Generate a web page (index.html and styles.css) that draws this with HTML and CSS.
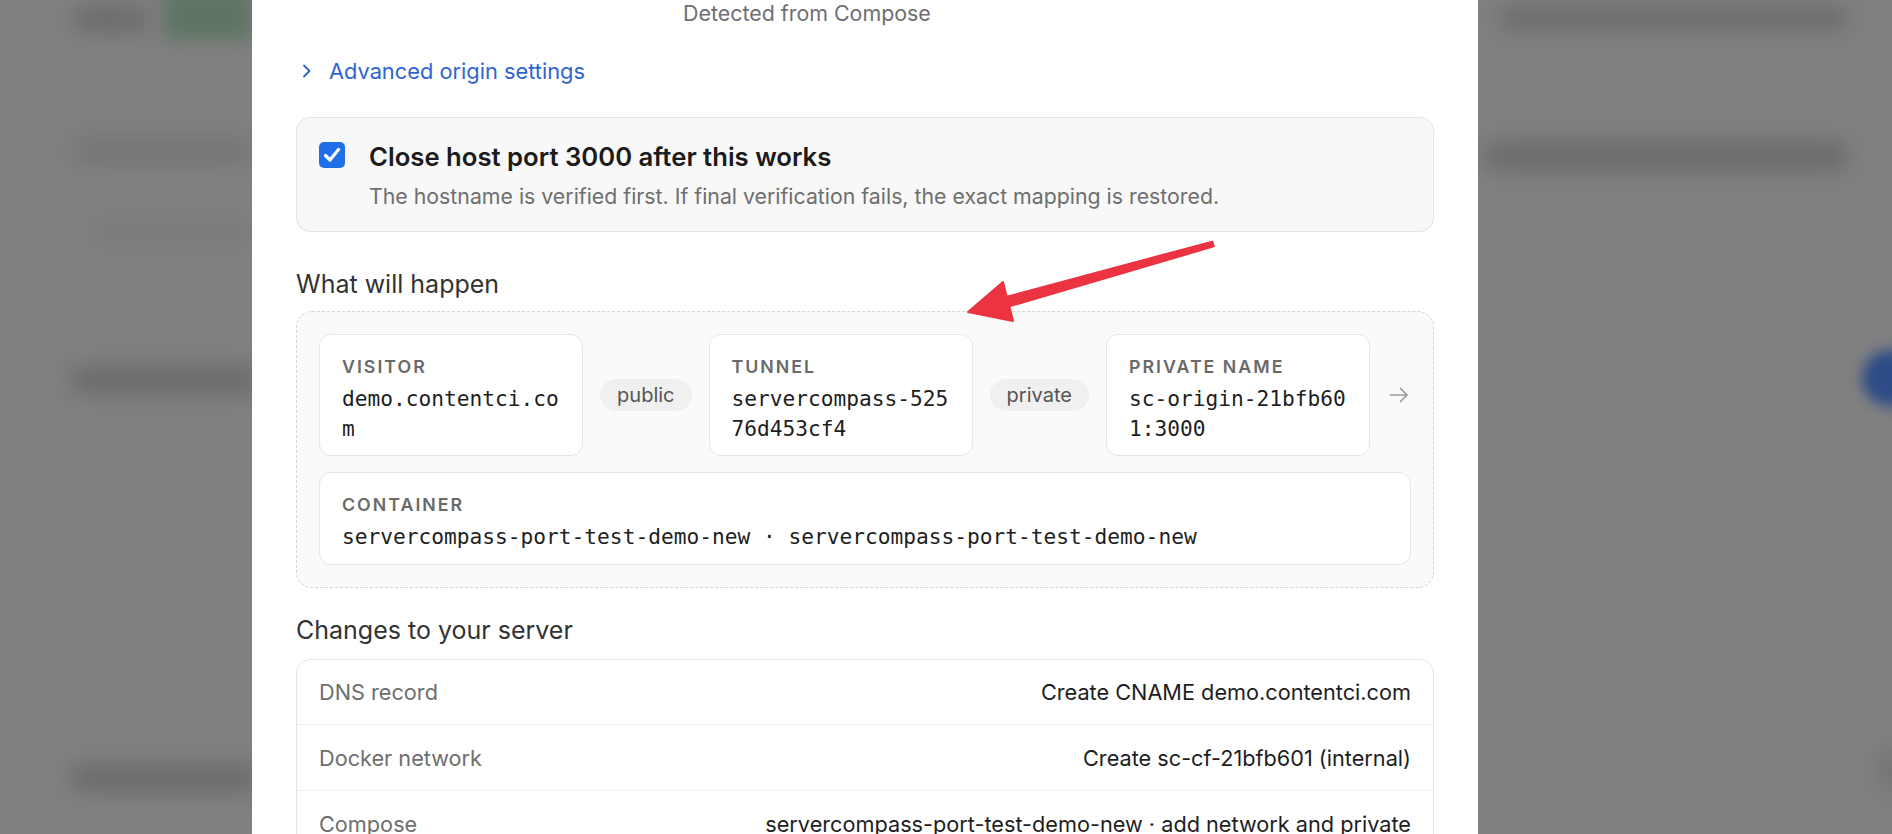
FILE: index.html
```html
<!DOCTYPE html>
<html lang="en">
<head>
<meta charset="utf-8">
<title>Expose service</title>
<link rel="stylesheet" href="styles.css">
</head>
<body>
<div class="page">
  <aside class="side side-left" aria-hidden="true">
    <div class="blob-row top-row">
      <div class="blob blob-dark b-l1"></div>
      <div class="blob blob-green"></div>
    </div>
    <div class="blob blob-soft b-l2"></div>
    <div class="blob blob-faint b-l3"></div>
    <div class="blob blob-dark b-l4"></div>
    <div class="blob blob-dark b-l5"></div>
  </aside>

  <main class="modal">
    <div class="detected">Detected from Compose</div>

    <button class="advanced" type="button">
      <svg class="chev" viewBox="0 0 10 14" width="10" height="14"><path d="M2 1.5 L7.5 7 L2 12.5" fill="none" stroke="currentColor" stroke-width="1.8" stroke-linecap="round" stroke-linejoin="round"/></svg>
      <span>Advanced origin settings</span>
    </button>

    <div class="check-card">
      <span class="checkbox">
        <svg viewBox="0 0 26 26" width="26" height="26"><rect x="0" y="0" width="26" height="26" rx="5" fill="#1f6fe8"/><path d="M6.5 13.5 L11 18 L19.5 7.5" fill="none" stroke="#fff" stroke-width="3.2" stroke-linecap="round" stroke-linejoin="round"/></svg>
      </span>
      <div class="check-text">
        <div class="check-title">Close host port 3000 after this works</div>
        <div class="check-sub">The hostname is verified first. If final verification fails, the exact mapping is restored.</div>
      </div>
    </div>

    <h3 class="section-title st-flow">What will happen</h3>
    <div class="flow">
      <div class="node">
        <div class="node-label">Visitor</div>
        <div class="node-value">demo.contentci.com</div>
      </div>
      <span class="pill">public</span>
      <div class="node">
        <div class="node-label">Tunnel</div>
        <div class="node-value">servercompass-52576d453cf4</div>
      </div>
      <span class="pill">private</span>
      <div class="node">
        <div class="node-label">Private name</div>
        <div class="node-value">sc-origin-21bfb601:3000</div>
      </div>
      <span class="flow-arrow">
        <svg viewBox="0 0 20 16" width="20" height="16"><path d="M1.5 8 H18 M11.5 1.5 L18 8 L11.5 14.5" fill="none" stroke="#9a9a9a" stroke-width="1.7" stroke-linecap="round" stroke-linejoin="round"/></svg>
      </span>
      <div class="node node-wide">
        <div class="node-label">Container</div>
        <div class="node-value">servercompass-port-test-demo-new · servercompass-port-test-demo-new</div>
      </div>
    </div>

    <h3 class="section-title st-changes">Changes to your server</h3>
    <div class="changes">
      <div class="change-row">
        <span class="change-key">DNS record</span>
        <span class="change-val">Create CNAME demo.contentci.com</span>
      </div>
      <div class="change-row">
        <span class="change-key">Docker network</span>
        <span class="change-val">Create sc-cf-21bfb601 (internal)</span>
      </div>
      <div class="change-row">
        <span class="change-key">Compose</span>
        <span class="change-val">servercompass-port-test-demo-new · add network and private</span>
      </div>
    </div>
  </main>

  <aside class="side side-right" aria-hidden="true">
    <div class="blob blob-dark b-r1"></div>
    <div class="blob blob-dark b-r2"></div>
    <div class="blob blob-blue"></div>
    <div class="blob blob-soft b-r4"></div>
  </aside>

  <svg class="annotation" viewBox="0 0 300 110" width="300" height="110" aria-hidden="true">
    <polygon points="28,87 63,57 66.7,71.7 272.3,16.6 273.7,21.4 69.3,81.3 73,96" fill="#ec3342" stroke="#ec3342" stroke-width="2" stroke-linejoin="round"/>
  </svg>
</div>
</body>
</html>
```

FILE: styles.css
```css
* { box-sizing: border-box; }

html, body {
  margin: 0;
  padding: 0;
  height: 834px;
  overflow: hidden;
  background: #808080;
}

body {
  font-family: "Inter", "Liberation Sans", sans-serif;
  color: #1d1d1f;
}

.page {
  position: relative;
  display: flex;
  height: 834px;
  overflow: hidden;
}

/* blurred backdrop */
.side {
  flex: none;
  overflow: hidden;
}
.side-left { width: 252px; }
.side-right { flex: 1; }

.blob {
  filter: blur(11px);
  border-radius: 12px;
}
.blob-row { display: flex; align-items: flex-start; }
.top-row { height: 42px; }
.blob-dark { background: #6a6a6a; }
.blob-soft { background: #737373; }
.blob-faint { background: #797979; }
.blob-green { background: #5e7462; width: 96px; height: 50px; margin-left: 14px; margin-top: -10px; border-radius: 6px; filter: blur(9px); }
.b-l1 { width: 85px; height: 24px; margin-left: 72px; margin-top: 7px; }
.b-l2 { width: 180px; height: 24px; margin-left: 72px; margin-top: 97px; }
.b-l3 { width: 160px; height: 18px; margin-left: 92px; margin-top: 60px; }
.b-l4 { width: 190px; height: 26px; margin-left: 70px; margin-top: 126px; }
.b-l5 { width: 190px; height: 26px; margin-left: 70px; margin-top: 372px; }

.b-r1 { width: 350px; height: 22px; margin-left: 20px; margin-top: 7px; }
.b-r2 { width: 364px; height: 28px; margin-left: 6px; margin-top: 113px; }
.blob-blue { background: #2d4b86; width: 60px; height: 56px; margin-left: 384px; margin-top: 180px; border-radius: 28px; filter: blur(7px); }
.b-r4 { width: 30px; height: 40px; margin-left: 400px; margin-top: 345px; }

/* modal */
.modal {
  flex: none;
  width: 1226px;
  background: #ffffff;
  padding: 0 44px;
}

.detected {
  padding-left: 387px;
  font-size: 21.4px;
  line-height: 26px;
  color: #6e6e73;
}

.advanced {
  display: flex;
  align-items: center;
  gap: 17px;
  margin-top: 32px;
  padding: 0 0 0 6px;
  border: 0;
  background: none;
  font: inherit;
  font-size: 21.8px;
  line-height: 26px;
  color: #2e64d2;
}
.chev { flex: none; }

.check-card {
  display: flex;
  align-items: flex-start;
  gap: 24px;
  margin-top: 33px;
  padding: 24px 22px 21px;
  background: #f8f8f8;
  border: 1px solid #e4e4e4;
  border-radius: 14px;
}
.checkbox { flex: none; width: 26px; height: 26px; display: block; }
.checkbox svg { display: block; }
.check-title {
  font-size: 25.7px;
  line-height: 30px;
  font-weight: 600;
  color: #1b1b1b;
}
.check-sub {
  margin-top: 10px;
  font-size: 21.3px;
  line-height: 28px;
  color: #6e6e6e;
}

.section-title {
  margin: 0;
  font-size: 25px;
  line-height: 32px;
  font-weight: 400;
  color: #333333;
}
.st-flow { margin-top: 36px; margin-bottom: 11px; }
.st-changes { margin-top: 26px; margin-bottom: 13px; }

.flow {
  display: grid;
  grid-template-columns: 1fr auto 1fr auto 1fr 24px;
  column-gap: 17px;
  row-gap: 16px;
  align-items: center;
  padding: 22px;
  background: #fafafa;
  border: 1px dashed #d6d6d6;
  border-radius: 16px;
}

.node {
  min-width: 0;
  padding: 22px 22px 11px;
  background: #ffffff;
  border: 1px solid #e6e6e6;
  border-radius: 12px;
}
.node-wide { grid-column: 1 / -1; padding-bottom: 12px; }

.node-label {
  font-size: 17.8px;
  line-height: 20px;
  font-weight: 600;
  letter-spacing: 2px;
  text-transform: uppercase;
  color: #6a6a6a;
}
.node-value {
  margin-top: 7px;
  font-family: "DejaVu Sans Mono", "Liberation Mono", monospace;
  font-size: 21.2px;
  line-height: 30px;
  color: #1e1e1e;
  word-break: break-all;
}

.pill {
  display: block;
  height: 32px;
  padding: 0 17px;
  border-radius: 16px;
  background: #f0f0f0;
  font-size: 20px;
  line-height: 32px;
  color: #555555;
}

.flow-arrow {
  display: flex;
  justify-content: center;
}
.flow-arrow svg { display: block; }

.changes {
  border: 1px solid #e6e6e6;
  border-radius: 14px;
  overflow: hidden;
}
.change-row {
  display: flex;
  align-items: center;
  justify-content: space-between;
  gap: 24px;
  height: 66px;
  padding: 0 22px;
  border-bottom: 1px solid #efefef;
  font-size: 21.7px;
}
.change-row:first-child { height: 65px; }
.change-key { color: #6e6e6e; }
.change-val { color: #1e1e1e; text-align: right; }

/* screenshot annotation drawn over the dialog */
.annotation {
  position: absolute;
  left: 940px;
  top: 225px;
}
```
